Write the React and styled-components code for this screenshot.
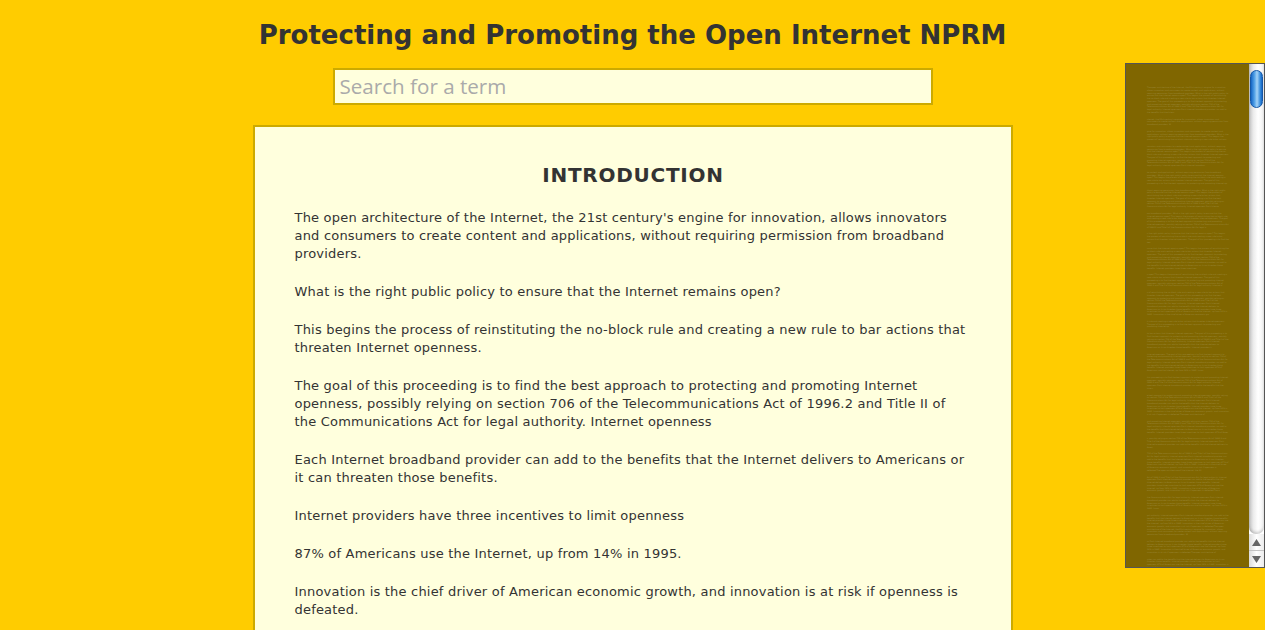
import styled, { createGlobalStyle } from 'styled-components';

const GlobalStyle = createGlobalStyle`
  html, body {
    margin: 0;
    padding: 0;
    height: 100%;
    overflow: hidden;
    background: #ffcc00;
    font-family: "DejaVu Sans", Verdana, sans-serif;
    color: #333;
  }
`;

const paragraphs = [
  "The open architecture of the Internet, the 21st century's engine for innovation, allows innovators and consumers to create content and applications, without requiring permission from broadband providers.",
  'What is the right public policy to ensure that the Internet remains open?',
  'This begins the process of reinstituting the no-block rule and creating a new rule to bar actions that threaten Internet openness.',
  'The goal of this proceeding is to find the best approach to protecting and promoting Internet openness, possibly relying on section 706 of the Telecommunications Act of 1996.2 and Title II of the Communications Act for legal authority. Internet openness',
  'Each Internet broadband provider can add to the benefits that the Internet delivers to Americans or it can threaten those benefits.',
  'Internet providers have three incentives to limit openness',
  '87% of Americans use the Internet, up from 14% in 1995.',
  'Innovation is the chief driver of American economic growth, and innovation is at risk if openness is defeated.',
];

// line count of each paragraph in the minimap
const miniBlocks = [11, 3, 5, 9, 6, 8, 7, 4, 9, 6, 10, 3, 7, 8, 5, 9, 6, 4, 8, 7, 5, 9, 6, 4];
const miniSource = paragraphs.join(' ').repeat(2);
const miniLine = 70;

const App = () => (
  <>
    <GlobalStyle />
    <Page>
      <Title>Protecting and Promoting the Open Internet NPRM</Title>
      <SearchInput placeholder="Search for a term" />
      <Document>
        <Heading>INTRODUCTION</Heading>
        {paragraphs.map((text) => (
          <Paragraph key={text}>{text}</Paragraph>
        ))}
      </Document>
    </Page>
    <Minimap>
      <MiniPage>
        {miniBlocks.map((lines, i) => (
          <MiniBlock key={i}>{miniSource.slice(i * 30, i * 30 + (lines - 0.5) * miniLine)}</MiniBlock>
        ))}
      </MiniPage>
      <Scrollbar>
        <Track>
          <Thumb />
        </Track>
        <Arrow>
          <svg width="9" height="7" viewBox="0 0 9 7"><path d="M4.5 0 9 7H0z" fill="#666" /></svg>
        </Arrow>
        <Arrow $last>
          <svg width="9" height="7" viewBox="0 0 9 7"><path d="M4.5 7 9 0H0z" fill="#666" /></svg>
        </Arrow>
      </Scrollbar>
    </Minimap>
  </>
);

export default App;

const Page = styled.div`
  display: flex;
  flex-direction: column;
  align-items: center;
  height: 630px;
  overflow: hidden;
`;

const Title = styled.h1`
  margin: 18px 0 0;
  font-size: 26px;
  line-height: 34px;
  font-weight: bold;
  color: #333;
  white-space: nowrap;
`;

const SearchInput = styled.input`
  box-sizing: border-box;
  flex: none;
  width: 600px;
  height: 37px;
  margin-top: 16px;
  padding: 0 5px 2px;
  border: 2px solid #ccaa00;
  border-radius: 0;
  outline: none;
  background: #ffffdd;
  font-family: "Open Sans", sans-serif;
  font-size: 20.6px;

  &::placeholder {
    color: #aaa;
    opacity: 1;
  }
`;

const Document = styled.main`
  box-sizing: border-box;
  flex: none;
  width: 760px;
  margin-top: 20px;
  padding: 36px 40px 40px;
  border: 2px solid #ccaa00;
  background: #ffffdd;
`;

const Heading = styled.h2`
  margin: 0 0 22px;
  padding-left: 1px;
  text-align: center;
  font-size: 20px;
  line-height: 24px;
  font-weight: bold;
  letter-spacing: 0.75px;
  color: #333;
`;

const Paragraph = styled.p`
  margin: 0 0 20px;
  font-size: 13px;
  line-height: 18px;
  letter-spacing: 0.2px;
  color: #333;
`;

const Minimap = styled.aside`
  position: fixed;
  top: 63px;
  right: 0;
  box-sizing: border-box;
  width: 140px;
  height: 505px;
  display: flex;
  border: 1px solid #555;
  background: #806600;
  overflow: hidden;
`;

const MiniPage = styled.div`
  flex: 1;
  min-width: 0;
  height: 100%;
  padding: 22px 20px 0 21px;
  overflow: hidden;
`;

const MiniBlock = styled.p`
  margin: 0 0 4px;
  font-size: 2px;
  line-height: 2.75px;
  color: #9c8a3e;
`;

const Scrollbar = styled.div`
  flex: none;
  width: 15px;
  display: flex;
  flex-direction: column;
  background: #fff;
`;

const Track = styled.div`
  flex: 1;
  padding-top: 6px;
  background: linear-gradient(to right, #c4c4c4, #ececec 30%, #fff 60%, #f2f2f2);
  border-radius: 0 0 7px 7px;
  box-shadow: inset 0 -2px 3px rgba(0, 0, 0, 0.18);
`;

const Thumb = styled.div`
  box-sizing: border-box;
  width: 13px;
  height: 38px;
  margin-left: 1px;
  border: 1px solid #1557a6;
  border-radius: 7px;
  background: linear-gradient(to right, #1565c4, #4f9fe6 30%, #a4d3f7 55%, #3489da 85%, #1565c4);
`;

const Arrow = styled.div`
  flex: none;
  height: 16px;
  display: flex;
  align-items: center;
  justify-content: center;
  background: linear-gradient(to right, #dcdcdc, #fff 50%, #ececec);
  border-top: ${(p) => (p.$last ? '1px solid #c4c4c4' : 'none')};
`;
